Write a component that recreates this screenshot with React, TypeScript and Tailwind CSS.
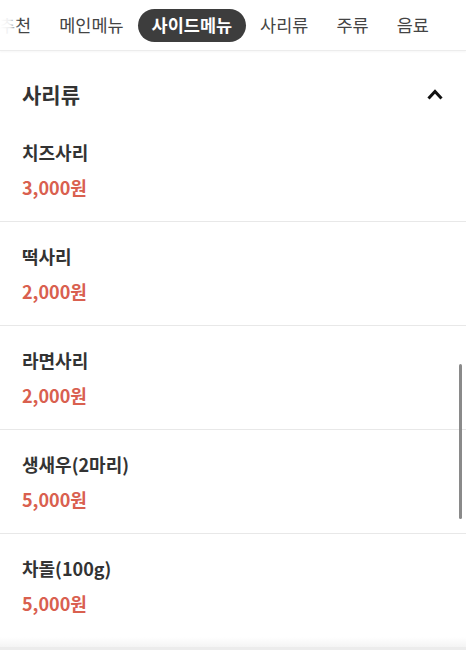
import React from 'react';

interface MenuItem {
  name: string;
  price: string;
}

const tabs = ['추천', '메인메뉴', '사이드메뉴', '사리류', '주류', '음료'];

const items: MenuItem[] = [
  { name: '치즈사리', price: '3,000원' },
  { name: '떡사리', price: '2,000원' },
  { name: '라면사리', price: '2,000원' },
  { name: '생새우(2마리)', price: '5,000원' },
  { name: '차돌(100g)', price: '5,000원' },
];

const App: React.FC = () => {
  const active = '사이드메뉴';

  return (
    <div
      className="relative w-[466px] h-[650px] overflow-hidden bg-white text-[#333]"
      style={{ fontFamily: '"Noto Sans CJK KR", "Noto Sans", sans-serif' }}
    >
      {/* Category tabs */}
      <div className="relative h-[51px] overflow-hidden border-b border-[#ececec] shadow-[0_1px_2px_rgba(0,0,0,0.04)]">
        <div className="flex items-center h-full -ml-[15px] whitespace-nowrap">
          {tabs.map(tab => (
            <div
              key={tab}
              className={
                tab === active
                  ? 'h-[33px] px-[14px] flex items-center rounded-full bg-[#3d3d3d] text-white text-[17.5px] font-bold'
                  : 'h-[33px] px-[14px] flex items-center text-[17.5px] text-[#444]'
              }
            >
              {tab}
            </div>
          ))}
        </div>
        {/* left fade of the scrolled tab row */}
        <div className="absolute left-0 top-0 h-full w-[20px] bg-gradient-to-r from-white via-white/90 to-transparent" />
      </div>

      {/* Section header */}
      <div className="flex items-center justify-between pl-[22px] pr-[23px] pt-[29px] pb-[10px]">
        <h2 className="text-[21px] leading-[28px] font-bold text-[#333]">사리류</h2>
        <svg width="16" height="11" viewBox="0 0 16 11" fill="none">
          <path d="M1.5 9.5 L8 2.5 L14.5 9.5" stroke="#111" strokeWidth="3" />
        </svg>
      </div>

      {/* Items */}
      <div>
        {items.map((item, i) => (
          <div
            key={item.name}
            className={
              i < items.length - 1
                ? 'px-[22px] pt-[22px] pb-[22px] border-b border-[#e8e8e8]'
                : 'px-[22px] pt-[22px] pb-[22px]'
            }
          >
            <div className="text-[18px] leading-[24px] font-semibold text-[#333]">{item.name}</div>
            <div className="mt-[11px] text-[18px] leading-[24px] font-bold text-[#d9604f]">{item.price}</div>
          </div>
        ))}
      </div>

      <div className="h-[10px] bg-gradient-to-b from-white to-[#f4f4f4]" />
      <div className="h-[10px] bg-[#ececec]" />

      {/* Scrollbar */}
      <div className="absolute left-[459px] top-[364px] w-[3px] h-[155px] rounded-full bg-[#8a8a8a]" />
    </div>
  );
};

export default App;
